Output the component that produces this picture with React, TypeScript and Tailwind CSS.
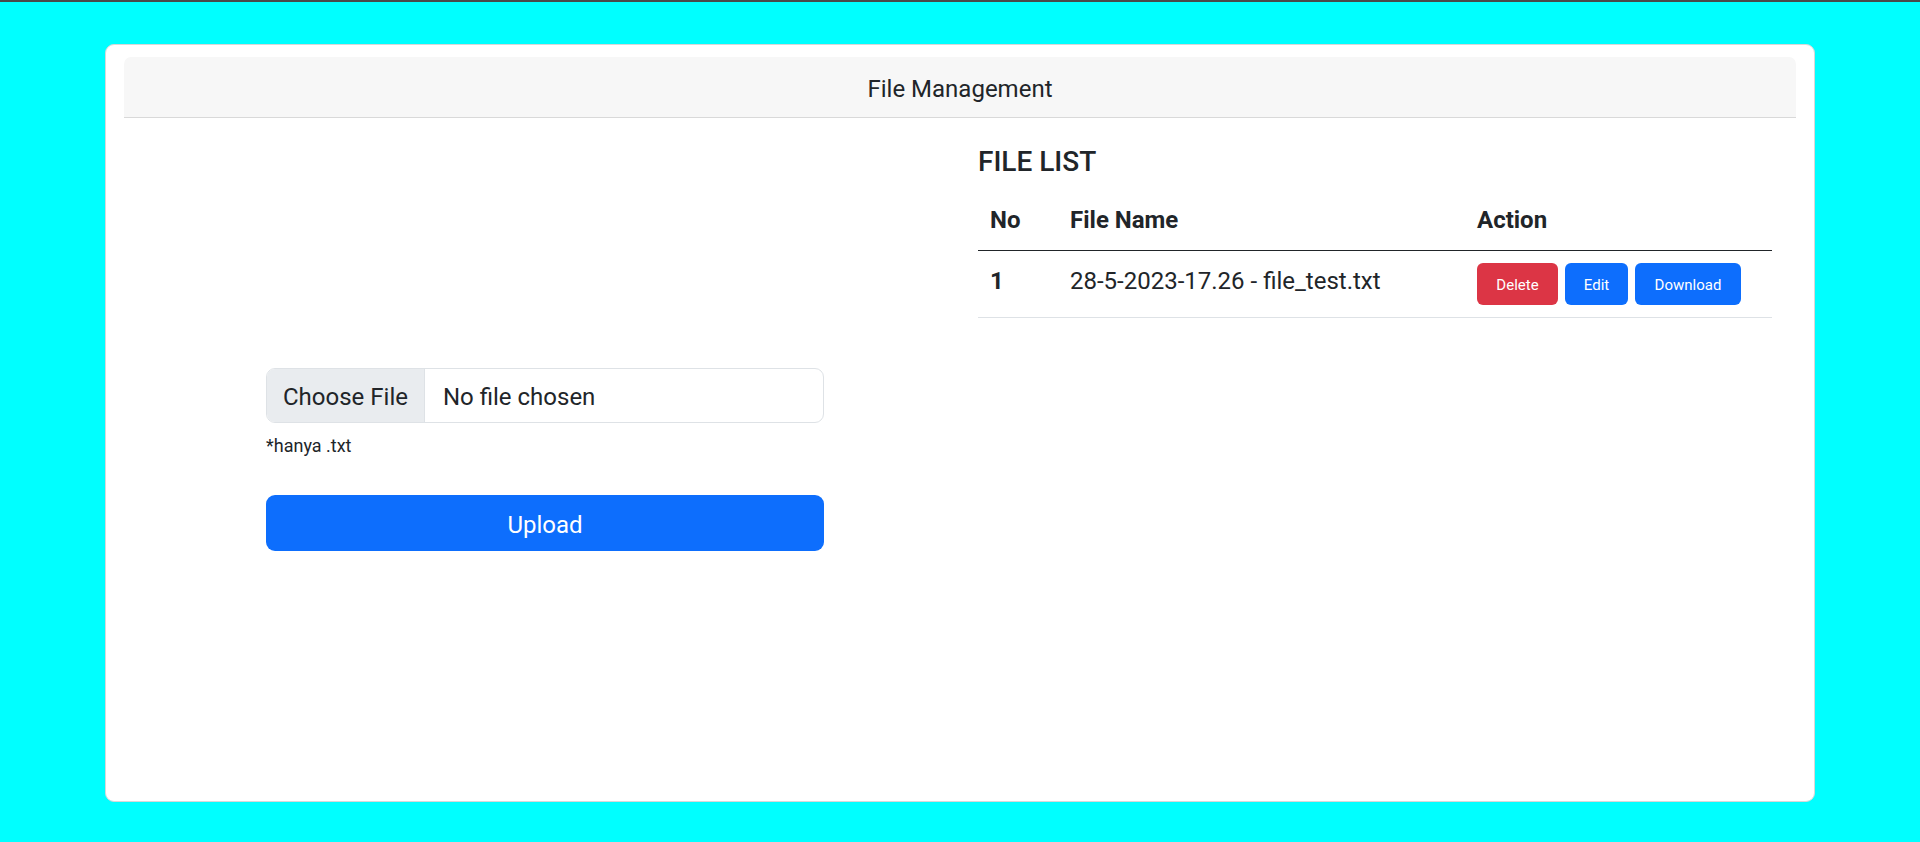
const files = [{ no: 1, name: '28-5-2023-17.26 - file_test.txt' }];

export default function App() {
  return (
    <div className="min-h-screen bg-[#00ffff] font-['Segoe_UI','Roboto',sans-serif] text-[#212529]">
      <div className="h-[2px] bg-[#4a4a4a]" />
      <div className="pt-[42px] px-[105px]">
        <div className="h-[758px] bg-white border border-[#d8d8d8] rounded-[9px] pt-[12px] px-[18px] flex flex-col">
          <div className="h-[61px] shrink-0 pt-[4px] bg-[#f7f7f7] border-b border-[#d9d9d9] rounded-t-[7px] flex items-center justify-center text-[24px]">
            File Management
          </div>

          <div className="flex flex-1">
            <div className="w-[836px] flex items-center">
              <form className="ml-[142px] w-[558px]" onSubmit={(e) => e.preventDefault()}>
                <label className="flex h-[55px] border border-[#dee2e6] rounded-[9px] overflow-hidden text-[24px] cursor-pointer">
                  <span className="shrink-0 whitespace-nowrap flex items-center pt-[3px] px-[16px] bg-[#e9ecef] border-r border-[#dee2e6]">
                    Choose File
                  </span>
                  <span className="flex items-center whitespace-nowrap pt-[3px] px-[18px]">No file chosen</span>
                  <input type="file" accept=".txt" className="hidden" />
                </label>
                <div className="mt-[9px] text-[18px] leading-[27px]">*hanya .txt</div>
                <button
                  type="submit"
                  className="mt-[36px] w-full h-[56px] pt-[3px] bg-[#0d6efd] text-white text-[24px] rounded-[9px] hover:bg-[#0b5ed7]"
                >
                  Upload
                </button>
              </form>
            </div>

            <div className="flex-1 pl-[18px] pt-[26px]">
              <h3 className="text-[28px] font-medium leading-[36px] mb-[10px]">FILE LIST</h3>
              <table className="w-[794px] border-collapse text-[24px] leading-[36px]">
                <thead>
                  <tr className="border-b border-[#212529]">
                    <th className="w-[80px] p-[12px] text-left font-bold">No</th>
                    <th className="w-[407px] p-[12px] text-left font-bold">File Name</th>
                    <th className="p-[12px] text-left font-bold">Action</th>
                  </tr>
                </thead>
                <tbody>
                  {files.map((file) => (
                    <tr key={file.no} className="border-b border-[#dee2e6]">
                      <th className="p-[12px] text-left font-bold align-top">{file.no}</th>
                      <td className="p-[12px] align-top">{file.name}</td>
                      <td className="p-[12px] align-top">
                        <div className="flex gap-[7px] text-[15px] text-white">
                          <button className="w-[81px] h-[42px] pt-[2px] bg-[#dc3545] rounded-[6px]">Delete</button>
                          <button className="w-[63px] h-[42px] pt-[2px] bg-[#0d6efd] rounded-[6px]">Edit</button>
                          <button className="w-[106px] h-[42px] pt-[2px] bg-[#0d6efd] rounded-[6px]">Download</button>
                        </div>
                      </td>
                    </tr>
                  ))}
                </tbody>
              </table>
            </div>
          </div>
        </div>
      </div>
    </div>
  );
}
